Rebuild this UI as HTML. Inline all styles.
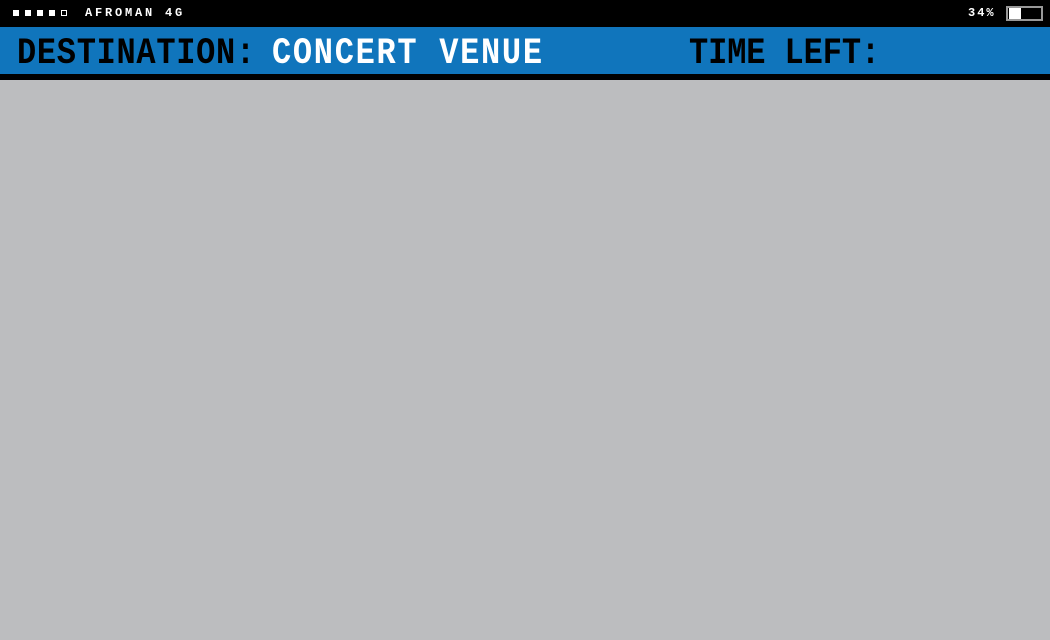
<!DOCTYPE html>
<html><head><style>
*{margin:0;padding:0;box-sizing:border-box}
body{width:1050px;height:640px;background:#bcbdbf;position:relative;overflow:hidden;font-family:"Liberation Mono",monospace;font-weight:bold}
.top{position:absolute;left:0;top:0;width:1050px;height:27px;background:#000}
.blue{position:absolute;left:0;top:27px;width:1050px;height:47px;background:#1075bc}
.blk{position:absolute;left:0;top:74px;width:1050px;height:6px;background:#000}
.sq{position:absolute;top:10px;width:6px;height:6px;background:#fff}
.t{position:absolute;white-space:nowrap;color:#fff}
.big{font-size:32px;transform:scaleY(1.15);transform-origin:0 0;top:32px}
</style></head><body>
<div class="top"></div><div class="blue"></div><div class="blk"></div>
<div class="sq" style="left:13px"></div><div class="sq" style="left:25px"></div><div class="sq" style="left:37px"></div><div class="sq" style="left:49px"></div>
<div class="sq" style="left:61px;background:none;border:1px solid #fff"></div>
<div class="t" style="left:85px;top:6px;font-size:12px;letter-spacing:2.8px">AFROMAN 4G</div>
<div class="t" style="left:968px;top:6px;font-size:12px;letter-spacing:2px">34%</div>
<div style="position:absolute;left:1006px;top:6px;width:37px;height:15px;border:2px solid #999;background:#fff"></div>
<div style="position:absolute;left:1008px;top:8px;width:33px;height:11px;background:#000"></div>
<div style="position:absolute;left:1009px;top:8px;width:12px;height:11px;background:#fff"></div>
<div class="t big" style="left:17px;color:#000;letter-spacing:0.7px">DESTINATION:</div>
<div class="t big" style="left:272px;letter-spacing:1.7px">CONCERT VENUE</div>
<div class="t big" style="left:689px;color:#000;letter-spacing:-0.1px">TIME LEFT:</div>
</body></html>
